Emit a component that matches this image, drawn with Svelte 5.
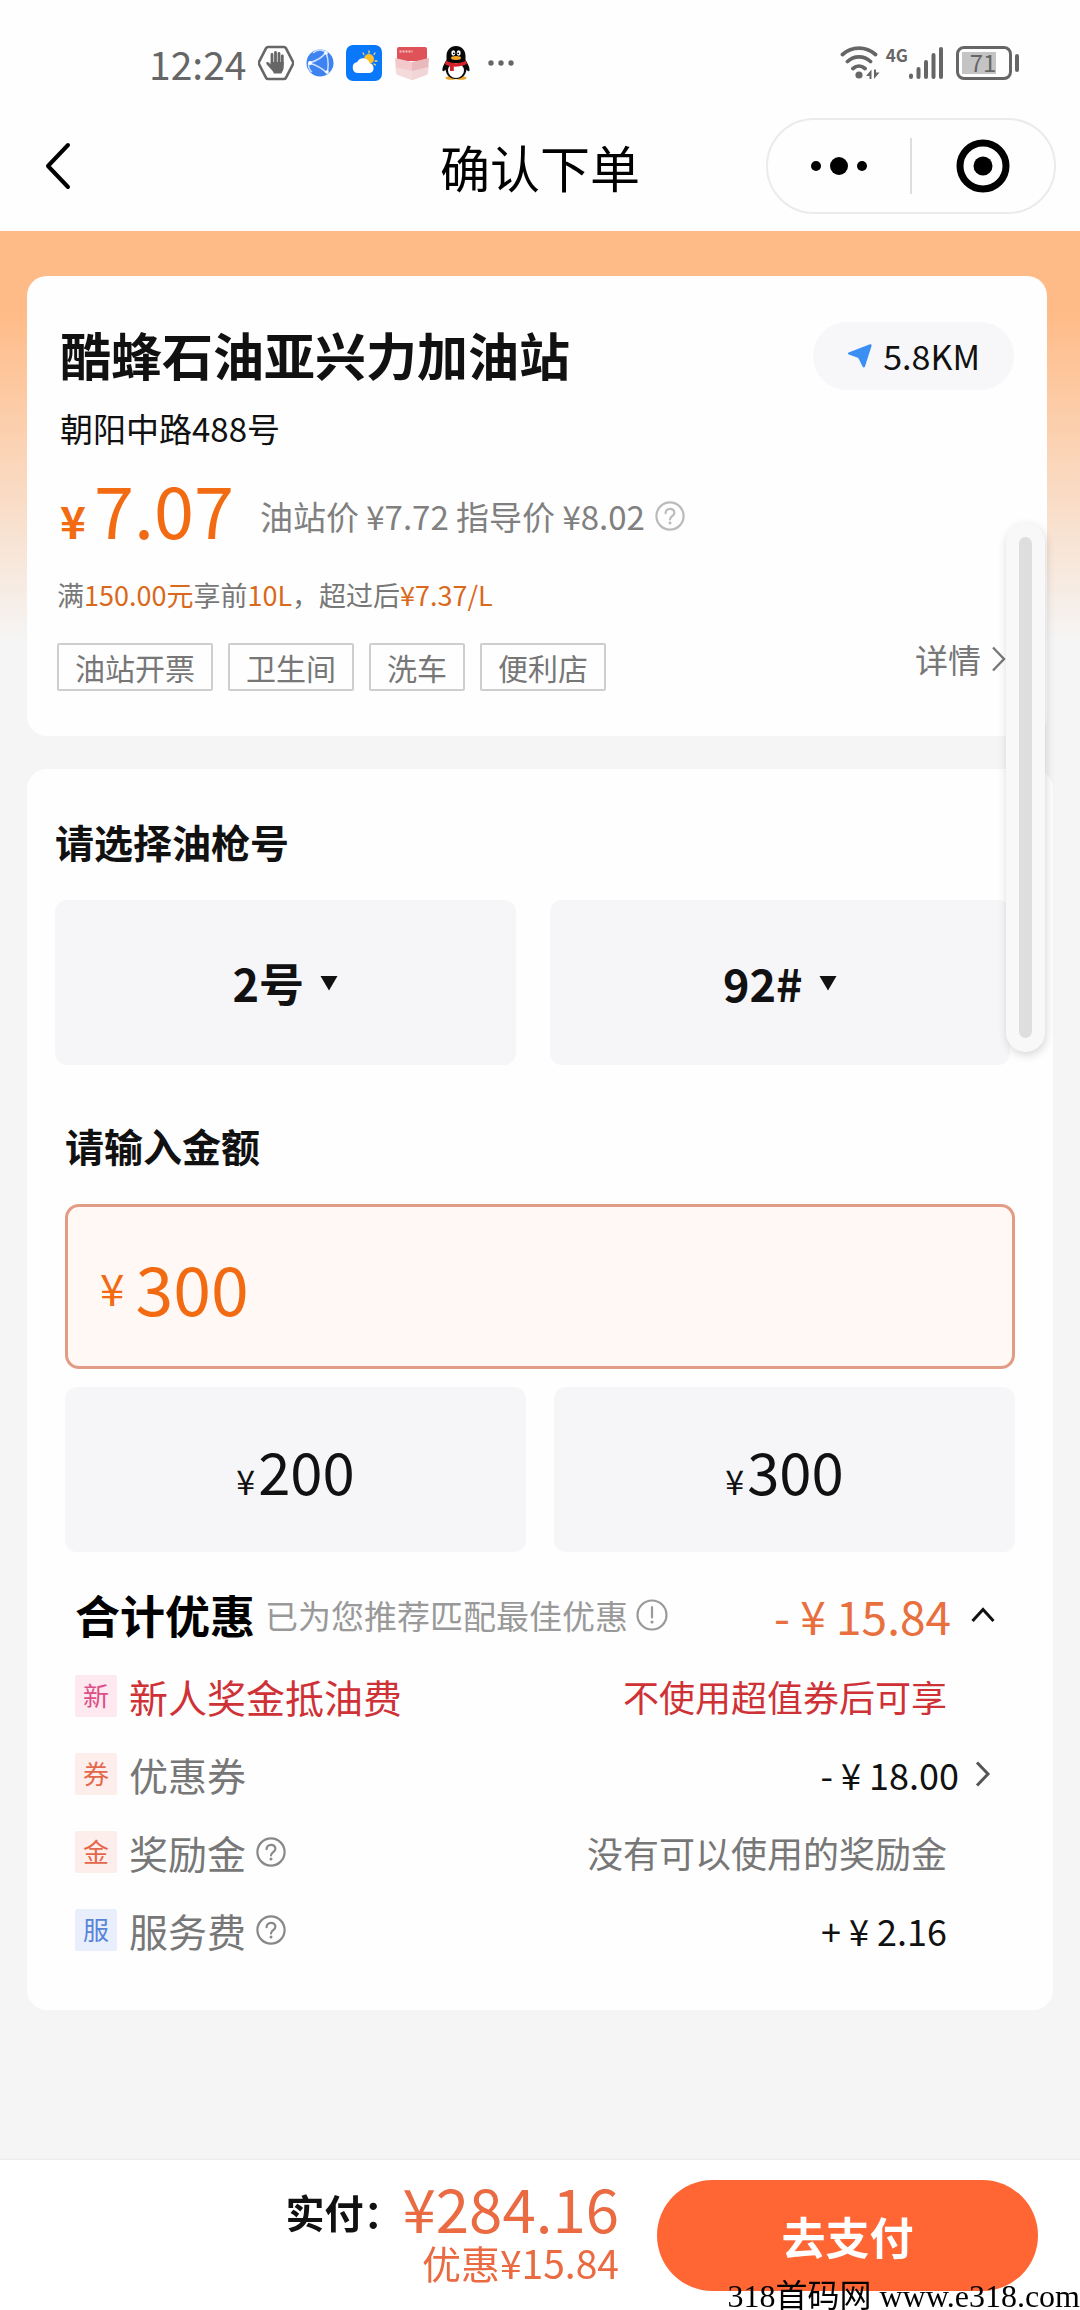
<script lang="ts">
  let gun = $state('2号');
  let fuel = $state('92#');
  let amount = $state('300');
  let open = $state(true);

  const tags = ['油站开票', '卫生间', '洗车', '便利店'];
  const quick = ['200', '300'];
  const rows = [
    { badge: '新', tone: 'pink', label: '新人奖金抵油费', value: '不使用超值券后可享', red: true },
    { badge: '券', tone: 'orange', label: '优惠券', value: '- ¥ 18.00', money: true, arrow: true },
    { badge: '金', tone: 'orange', label: '奖励金', value: '没有可以使用的奖励金', help: true },
    { badge: '服', tone: 'blue', label: '服务费', value: '+ ¥ 2.16', money: true, help: true },
  ];
</script>

{#snippet helpIcon()}
  <svg class="help" width="30" height="30" viewBox="0 0 30 30" fill="none" stroke="currentColor" stroke-width="2.200">
    <circle cx="15" cy="15" r="13.600" />
    <path d="M10.600 12.200c0-2.600 1.900-4.400 4.400-4.400s4.400 1.700 4.400 4c0 3.200-4.400 3.400-4.400 6.600" stroke-linecap="round" />
    <circle cx="15" cy="22" r="1.500" fill="currentColor" stroke="none" />
  </svg>
{/snippet}

{#snippet triangle()}
  <svg width="18" height="16" viewBox="0 0 18 16"><path d="M0.500 1h17L9 15.500z" fill="#111" /></svg>
{/snippet}

<div class="page">
  <header>
    <div class="status">
      <span class="time">12:24</span>
      <!-- do not disturb -->
      <svg width="36" height="36" viewBox="0 0 36 36">
        <path d="M10 2h16q1.200 0 1.800 1L35 17q.5 1 0 2l-7.200 14q-.6 1-1.800 1H10q-1.200 0-1.800-1L1 19q-.5-1 0-2L8.200 3q.6-1 1.800-1z" fill="none" stroke="#666" stroke-width="2.600" />
        <path d="M14 19V9.500M17.500 18V7.500M21 18V8.500M24.300 19v-8" stroke="#666" stroke-width="2.800" stroke-linecap="round" />
        <path d="M12.600 17h13.100v5c0 3-1.500 4.500-2.300 6.500h-7.500c-1-3-4-5.500-7.300-9.300-1.200-1.600.6-2.700 2-1.700l2.300 2z" fill="#666" />
      </svg>
      <!-- browser -->
      <svg width="28" height="28" viewBox="0 0 28 28">
        <circle cx="14" cy="14" r="13.500" fill="#3f83f0" />
        <path d="M3 14C10 12 17 8 20 3M3 14c7 2 14 6 18 10M20 3c2 6 3 14 1 21M3 14c-1 3 0 7 3 9M20 3c-5-3-10-2-13 1" fill="none" stroke="#cfe1ff" stroke-width="1.500" />
        <circle cx="4" cy="14" r="2" fill="#fff" />
        <circle cx="20" cy="4" r="1.800" fill="#fff" />
        <circle cx="21" cy="23" r="1.800" fill="#fff" />
      </svg>
      <!-- weather -->
      <svg width="36" height="36" viewBox="0 0 36 36">
        <rect width="36" height="36" rx="7" fill="#0a78fb" />
        <circle cx="23" cy="14" r="5" fill="#ffc02e" />
        <path d="M23 6v2M17 8l1 1.500M29 8l-1 1.500M31 16h-2M29.500 20l-1.500-1" stroke="#ffd768" stroke-width="1.300" stroke-linecap="round" />
        <path d="M12 28a5.500 5.500 0 0 1-.8-10.900 6.500 6.500 0 0 1 12.300 1.200A5 5 0 0 1 24 28z" fill="#fff" />
      </svg>
      <!-- red envelope box -->
      <svg width="36" height="36" viewBox="0 0 36 36">
        <path d="M3 4q0-2 2-2h26q2 0 2 2v12H3z" fill="#df5257" />
        <path d="M5.500 6.500h13" stroke="#f6c3c4" stroke-width="1.800" stroke-dasharray="2 1" />
        <path d="M1 13l17 4v18L4 30q-2-.8-2-3z" fill="#f3c9cc" />
        <path d="M35 13l-17 4v18l14-5q2-.8 2-3z" fill="#eab9bd" />
        <path d="M1.500 22l16.500 4v9L4 30q-2-.8-2-3zM34.500 22L18 26v9l14-5q2-.8 2-3z" fill="#f5e1e3" opacity=".7" />
      </svg>
      <!-- QQ penguin -->
      <svg width="28" height="34" viewBox="0 0 28 34">
        <ellipse cx="9" cy="32" rx="5.500" ry="1.800" fill="#f0a524" />
        <ellipse cx="19" cy="32" rx="5.500" ry="1.800" fill="#f0a524" />
        <path d="M14 0c6 0 9.500 4.500 9.500 10v4c1.500 2.500 4.500 7 4 10.500-.5 1.500-2 .5-3-1C24 28.500 20.500 33 14 33S4 28.500 3.500 23.500c-1 1.500-2.500 2.500-3 1C0 21 3 16.500 4.500 14v-4C4.500 4.500 8 0 14 0z" fill="#080808" />
        <ellipse cx="14" cy="24.500" rx="8" ry="7.500" fill="#fff" />
        <ellipse cx="11.300" cy="7" rx="2" ry="2.700" fill="#fff" />
        <ellipse cx="16.700" cy="7" rx="2" ry="2.700" fill="#fff" />
        <circle cx="11.800" cy="7.300" r=".9" />
        <circle cx="16.200" cy="7.300" r=".9" />
        <ellipse cx="14" cy="12" rx="5" ry="1.900" fill="#f5a623" />
        <path d="M4 14.500c6 3.500 14 3.500 20 0l.8 3.500c-4 2-9 2.800-13 2.600v4.400H8v-5c-2-.4-3.800-1-5-2z" fill="#d5212b" />
      </svg>
      <svg width="38" height="10" viewBox="0 0 38 10" fill="#666">
        <circle cx="9" cy="5" r="2.700" />
        <circle cx="19" cy="5" r="2.700" />
        <circle cx="29" cy="5" r="2.700" />
      </svg>

      <div class="signals">
        <svg width="40" height="36" viewBox="0 0 40 36">
          <path d="M2.500 9.500c9.500-8.600 23.500-8.600 33 0M7.500 16.500c6.600-6.300 16.400-6.300 23 0M13 23.500c3.600-3.300 8.400-3.300 12 0" fill="none" stroke="#666" stroke-width="3.800" stroke-linecap="round" />
          <circle cx="19" cy="30" r="3.600" fill="#666" />
          <path d="M26 31l5.500-6.500V34h-2v-3zM39.500 27.500L34 34v-9.500h2v3z" fill="#666" />
        </svg>
        <span class="net">4G</span>
        <svg width="36" height="36" viewBox="0 0 36 36" stroke="#666" stroke-width="4" stroke-linecap="round">
          <path d="M3 30.500v1.500M10.500 24v8M18 17v15M25.500 10v22M33 4v28" />
        </svg>
        <div class="battery"><span>71</span></div>
        <i class="cap"></i>
      </div>
    </div>

    <nav>
      <button class="back" aria-label="返回">
        <svg width="36" height="48" viewBox="0 0 36 48" fill="none" stroke="#000" stroke-width="4" stroke-linecap="round" stroke-linejoin="round">
          <path d="M28 3L8 24l20 21" />
        </svg>
      </button>
      <h1>确认下单</h1>
      <div class="capsule">
        <button aria-label="更多">
          <svg width="60" height="20" viewBox="0 0 60 20">
            <circle cx="7" cy="10" r="5" />
            <circle cx="30" cy="10" r="9" />
            <circle cx="53" cy="10" r="5" />
          </svg>
        </button>
        <button aria-label="关闭">
          <svg width="54" height="54" viewBox="0 0 54 54">
            <circle cx="27" cy="27" r="23" fill="none" stroke="#000" stroke-width="7" />
            <circle cx="27" cy="27" r="9.500" />
          </svg>
        </button>
      </div>
    </nav>
  </header>

  <main>
    <section class="card station">
      <div class="head">
        <h2>酷蜂石油亚兴力加油站</h2>
        <button class="distance">
          <svg width="26" height="26" viewBox="0 0 26 26"><path d="M1.500 9.500L23 1.300q2-.6 1.600 1.400L18 23.500q-1 2-2.300.3l-4-8q-.5-1-1.500-1.300L1.700 11.600q-1.600-1-.2-2.100z" fill="#3b8ff3" /></svg>
          5.8KM
        </button>
      </div>
      <p class="address">朝阳中路488号</p>
      <div class="price">
        <span class="yen">¥</span>
        <span class="now">7.07</span>
        <span class="others">油站价 ¥7.72 指导价 ¥8.02 {@render helpIcon()}</span>
      </div>
      <p class="rule">满<b>150.00元</b>享前<b>10L</b>，超过后<b>¥7.37/L</b></p>
      <div class="foot">
        <ul>
          {#each tags as tag}
            <li>{tag}</li>
          {/each}
        </ul>
        <a href="#detail">
          详情
          <svg width="24" height="28" viewBox="0 0 24 28" fill="none" stroke="#777" stroke-width="2.400"><path d="M6 2.500l11 11.500L6 25.500" /></svg>
        </a>
      </div>
    </section>

    <section class="card order">
      <h3>请选择油枪号</h3>
      <div class="pickers">
        <label>
          <select bind:value={gun} aria-label="油枪号">
            <option>1号</option>
            <option>2号</option>
            <option>3号</option>
          </select>
          {@render triangle()}
        </label>
        <label>
          <select bind:value={fuel} aria-label="油号">
            <option>92#</option>
            <option>95#</option>
          </select>
          {@render triangle()}
        </label>
      </div>

      <div class="amount">
        <h3><label for="amount">请输入金额</label></h3>
        <div class="field">
          <span>¥</span>
          <input id="amount" type="text" inputmode="decimal" bind:value={amount} />
        </div>
        <div class="quick">
          {#each quick as q}
            <button onclick={() => (amount = q)}><small>¥</small>{q}</button>
          {/each}
        </div>
      </div>

      <div class="discount">
        <div class="total">
          <h4>合计优惠</h4>
          <span class="hint">已为您推荐匹配最佳优惠</span>
          <svg width="32" height="32" viewBox="0 0 32 32" fill="none" stroke="#999" stroke-width="2.200">
            <circle cx="16" cy="16" r="14.500" />
            <path d="M16 8v10.500" stroke-linecap="round" />
            <circle cx="16" cy="23" r="1.600" fill="#999" stroke="none" />
          </svg>
          <button aria-expanded={open} onclick={() => (open = !open)}>
            - ¥ 15.84
            <svg class:closed={!open} width="24" height="20" viewBox="0 0 24 20" fill="none" stroke="#111" stroke-width="3"><path d="M1.500 16L12 4.500 22.500 16" /></svg>
          </button>
        </div>
        {#if open}
          <ul>
            {#each rows as row}
              <li class:red={row.red}>
                <i class="badge {row.tone}">{row.badge}</i>
                <span class="label">{row.label}</span>
                {#if row.help}{@render helpIcon()}{/if}
                <span class="value" class:money={row.money} class:link={row.arrow}>{row.value}</span>
                {#if row.arrow}
                  <svg width="24" height="28" viewBox="0 0 24 28" fill="none" stroke="#555" stroke-width="3"><path d="M6 2.500l11 11.500L6 25.500" /></svg>
                {/if}
              </li>
            {/each}
          </ul>
        {/if}
      </div>
    </section>

    <div class="scroller"><i></i></div>
  </main>

  <footer>
    <strong>实付：</strong>
    <div class="sum">
      <span class="pay">¥284.16</span>
      <span class="save">优惠¥15.84</span>
    </div>
    <button>去支付</button>
    <span class="watermark">318首码网 www.e318.com</span>
  </footer>
</div>

<style>
  :global(body) {
    margin: 0;
    background: #f5f5f5;
  }

  .page {
    min-height: 100vh;
    display: flex;
    flex-direction: column;
    font-family: 'Noto Sans CJK SC', sans-serif;
    color: #111;
  }

  h1, h2, h3, h4, p, ul {
    margin: 0;
    padding: 0;
    list-style: none;
  }

  button, input, select {
    font: inherit;
    color: inherit;
    border: none;
    background: none;
    padding: 0;
    margin: 0;
  }

  svg {
    display: block;
    flex: none;
  }

  i {
    font-style: normal;
  }

  /* Status bar and title */
  header {
    background: #fefefe;
    padding: 36px 0 17px;
  }

  .status {
    display: flex;
    align-items: center;
    gap: 12px;
    padding: 0 61px 0 149px;
    height: 54px;
    color: #666;
  }

  .time {
    font-size: 39px;
    line-height: 52px;
  }

  .signals {
    margin-left: auto;
    display: flex;
    align-items: center;
  }

  .net {
    align-self: flex-start;
    margin-left: 6px;
    font-size: 17px;
    line-height: 20px;
    font-weight: 700;
  }

  .battery {
    box-sizing: border-box;
    width: 56px;
    height: 34px;
    margin-left: 12px;
    border: 3px solid #666;
    border-radius: 8px;
    padding: 3px;
    display: flex;
    background: linear-gradient(#c4c4c4, #c4c4c4) 3px 3px / 34px 22px no-repeat;
  }

  .battery span {
    flex: 1;
    padding-right: 2px;
    text-align: center;
    font-size: 24px;
    line-height: 20px;
  }

  .cap {
    width: 4px;
    height: 18px;
    margin-left: 3px;
    border-radius: 2px;
    background: #666;
  }

  nav {
    display: grid;
    grid-template-columns: 1fr auto 1fr;
    align-items: center;
    margin-top: 28px;
    padding: 0 24px;
    color: #000;
  }

  .back {
    justify-self: start;
    margin-left: 16px;
  }

  h1 {
    font-size: 50px;
    line-height: 72px;
    font-weight: 400;
  }

  .capsule {
    box-sizing: border-box;
    justify-self: end;
    width: 290px;
    height: 96px;
    border: 2px solid #ebebeb;
    border-radius: 48px;
    display: flex;
    align-items: center;
  }

  .capsule button {
    flex: 1;
    height: 56px;
    display: flex;
    align-items: center;
    justify-content: center;
  }

  .capsule button + button {
    border-left: 2px solid #ddd;
  }

  main {
    position: relative;
    flex: 1;
    padding: 45px 27px 0;
    background: #f5f5f5 linear-gradient(#ffbb87 0, #ffbb87 80px, #f5f5f5 410px) no-repeat;
  }

  .card {
    background: #fefefe;
    border-radius: 20px;
  }

  /* Station */
  .station {
    margin-right: 6px;
    padding: 46px 33px 45px 30px;
  }

  .head {
    display: flex;
    align-items: flex-start;
    justify-content: space-between;
    padding-left: 3px;
  }

  h2 {
    font-size: 51px;
    line-height: 64px;
    font-weight: 700;
  }

  .distance {
    display: flex;
    align-items: center;
    gap: 10px;
    height: 68px;
    padding: 0 34px;
    border-radius: 34px;
    background: #f7f7f9;
    font-size: 34px;
    line-height: 44px;
  }

  .address {
    margin-top: 16px;
    padding-left: 3px;
    font-size: 33px;
    line-height: 44px;
  }

  .price {
    display: flex;
    align-items: baseline;
    margin-top: 18px;
    padding-left: 3px;
    color: #f26b12;
  }

  .yen {
    font-size: 44px;
    line-height: 48px;
    font-weight: 700;
  }

  .now {
    margin-left: 8px;
    font-size: 72px;
    line-height: 80px;
  }

  .others {
    align-self: flex-end;
    display: flex;
    align-items: center;
    gap: 10px;
    margin-left: 26px;
    padding-bottom: 8px;
    font-size: 33px;
    line-height: 48px;
    color: #808080;
  }

  .others .help {
    color: #bbb;
  }

  .help {
    color: #888;
  }

  .rule {
    margin-top: 27px;
    font-size: 27px;
    line-height: 40px;
    color: #777;
  }

  .rule b {
    font-weight: 400;
    color: #d9691c;
  }

  .foot {
    display: flex;
    justify-content: space-between;
    align-items: flex-start;
    margin-top: 28px;
    padding-right: 3px;
  }

  .foot ul {
    display: flex;
    gap: 15px;
  }

  .foot li {
    padding: 0 16px;
    border: 2px solid #cecece;
    border-radius: 2px;
    font-size: 30px;
    line-height: 44px;
    color: #777;
  }

  .foot a {
    display: flex;
    align-items: center;
    gap: 6px;
    font-size: 33px;
    line-height: 32px;
    color: #777;
    text-decoration: none;
  }

  /* Order form */
  .order {
    margin-top: 33px;
    padding: 44px 38px 41px 28px;
  }

  h3 {
    font-size: 39px;
    line-height: 56px;
    font-weight: 700;
  }

  .pickers {
    display: grid;
    grid-template-columns: 1fr 1fr;
    gap: 34px;
    margin: 31px 5px 0 0;
  }

  .pickers label {
    display: flex;
    align-items: center;
    justify-content: center;
    gap: 16px;
    height: 165px;
    border-radius: 12px;
    background: #f6f6f8;
  }

  select {
    appearance: none;
    field-sizing: content;
    font-size: 45px;
    line-height: 60px;
    font-weight: 700;
  }

  .amount {
    margin-top: 52px;
    padding-left: 10px;
  }

  .field {
    box-sizing: border-box;
    display: flex;
    align-items: center;
    gap: 11px;
    height: 165px;
    margin-top: 31px;
    padding: 0 32px;
    border: 3px solid #e29c85;
    border-radius: 14px;
    background: #fff8f5;
    color: #f26b12;
  }

  .field span {
    font-size: 44px;
    line-height: 60px;
  }

  .field input {
    flex: 1;
    min-width: 0;
    height: 100px;
    font-size: 68px;
    outline: none;
  }

  .quick {
    display: grid;
    grid-template-columns: 1fr 1fr;
    gap: 28px;
    margin-top: 18px;
  }

  .quick button {
    height: 165px;
    border-radius: 12px;
    background: #f6f6f8;
    font-size: 58px;
  }

  .quick small {
    margin-right: 3px;
    font-size: 34px;
  }

  /* Discounts */
  .discount {
    margin-top: 31px;
    padding: 0 20px;
  }

  .total {
    display: flex;
    align-items: center;
    height: 64px;
  }

  h4 {
    font-size: 45px;
    line-height: 64px;
    font-weight: 700;
    color: #000;
  }

  .hint {
    margin: 0 8px 0 10px;
    font-size: 33px;
    line-height: 48px;
    color: #999;
  }

  .total button {
    display: flex;
    align-items: center;
    gap: 20px;
    margin-left: auto;
    font-size: 46px;
    line-height: 64px;
    color: #e8703f;
  }

  .closed {
    transform: rotate(180deg);
  }

  .discount ul {
    margin-top: 10px;
  }

  .discount li {
    display: flex;
    align-items: center;
    height: 78px;
    font-size: 39px;
    line-height: 56px;
    color: #777;
  }

  .badge {
    width: 42px;
    height: 42px;
    margin-right: 12px;
    border-radius: 2px;
    text-align: center;
    font-size: 26px;
    line-height: 40px;
  }

  .pink {
    background: #fde9ef;
    color: #dd4f86;
  }

  .orange {
    background: #fdeeeb;
    color: #e4674b;
  }

  .blue {
    background: #e9eefc;
    color: #5785d6;
  }

  .discount .help {
    margin-left: 10px;
  }

  .value {
    margin-left: auto;
    margin-right: 48px;
    font-size: 36px;
  }

  .money {
    color: #111;
  }

  .link {
    margin-right: 12px;
  }

  .red .label, .red .value {
    color: #cf3236;
  }

  .scroller {
    position: absolute;
    top: 292px;
    right: 35px;
    box-sizing: border-box;
    width: 39px;
    height: 529px;
    padding: 14px 13px;
    border-radius: 20px;
    background: #f8f8f8;
    box-shadow: 1px 3px 10px rgba(0, 0, 0, 0.16);
  }

  .scroller i {
    display: block;
    height: 100%;
    border-radius: 7px;
    background: #dedede;
  }

  footer {
    position: sticky;
    bottom: 0;
    box-sizing: border-box;
    height: 150px;
    display: flex;
    justify-content: flex-end;
    align-items: flex-start;
    padding: 20px 42px 0;
    background: #fff;
    box-shadow: 0 -1px 2px rgba(0, 0, 0, 0.05);
  }

  footer strong {
    padding-top: 4px;
    font-size: 39px;
    line-height: 54px;
  }

  .sum {
    display: flex;
    flex-direction: column;
    align-items: flex-end;
    margin-right: 38px;
    color: #ea6a41;
  }

  .pay {
    font-size: 60px;
    line-height: 54px;
  }

  .save {
    font-size: 39px;
    line-height: 56px;
  }

  footer button {
    width: 381px;
    height: 111px;
    border-radius: 56px;
    background: #ff6634;
    color: #fff;
    font-size: 44px;
    font-weight: 700;
  }

  .watermark {
    position: absolute;
    right: 0;
    bottom: 0;
    font-family: 'Liberation Serif', 'Noto Sans CJK SC', serif;
    font-size: 32px;
    line-height: 28px;
    color: #000;
  }
</style>
